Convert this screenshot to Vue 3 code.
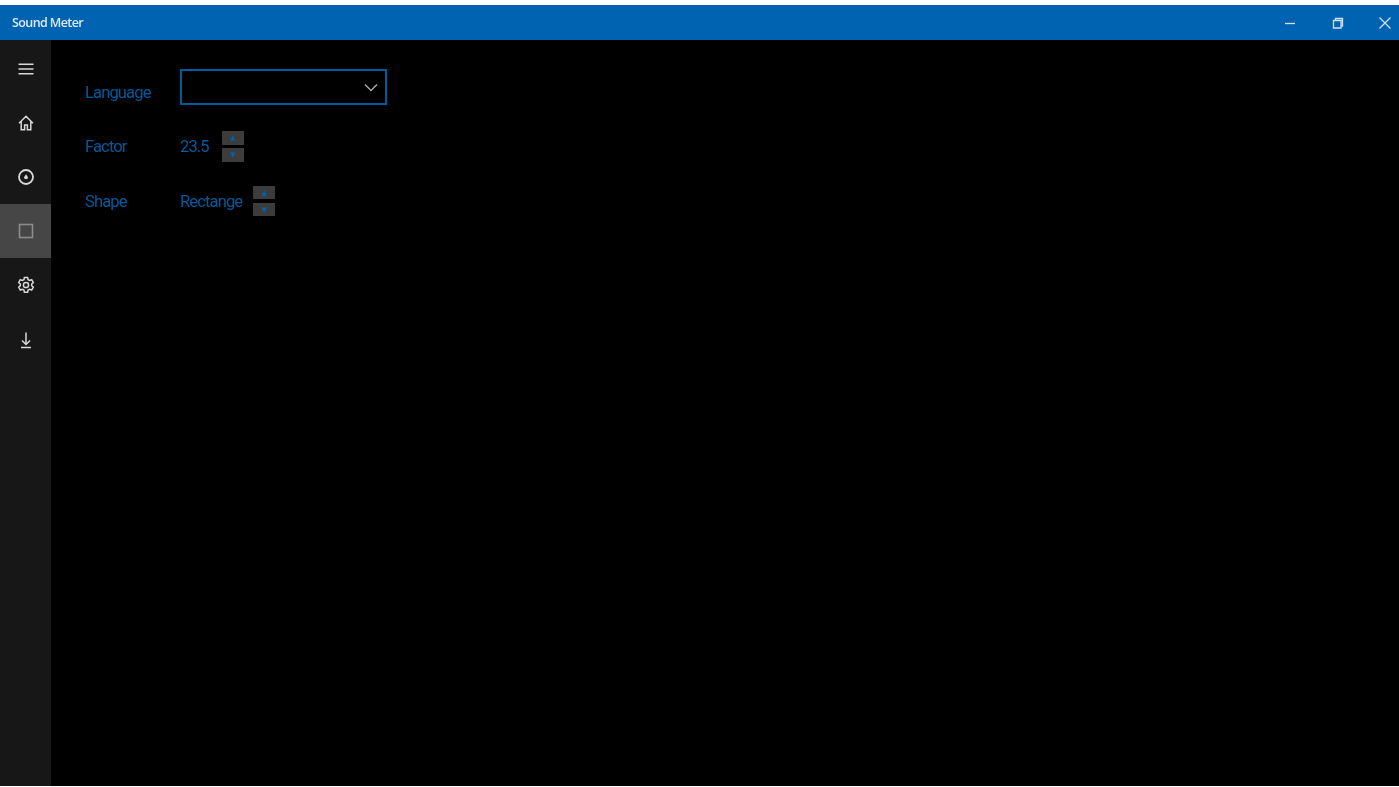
<script setup>
const rows = [
  { label: 'Factor', value: '23.5', kind: 'num' },
  { label: 'Shape', value: 'Rectange', kind: 'txt' }
]
</script>

<template>
  <div class="window">
    <header class="titlebar">
      <span class="title">Sound Meter</span>
      <div class="controls">
        <button class="ctl"><svg width="12" height="12" viewBox="0 0 12 12"><path d="M1 6.500h10" /></svg></button>
        <button class="ctl"><svg width="12" height="12" viewBox="0 0 12 12"><path d="M1.500 3.500h7.500v7.500h-7.500zM3.500 3.500v-2h7v7.500h-1.500" /></svg></button>
        <button class="ctl"><svg width="14" height="14" viewBox="0 0 14 14"><path d="M1.500 1.500l11 11M12.500 1.500l-11 11" /></svg></button>
      </div>
    </header>
    <div class="body">
      <nav class="rail">
        <div class="item">
          <svg width="18" height="18" viewBox="0 0 18 18"><path d="M1.500 4.200h15M1.500 9h15M1.500 13.800h15" /></svg>
        </div>
        <div class="item">
          <svg width="18" height="18" viewBox="0 0 18 18"><path d="M2 9.200L9 2.200l7 7M4.200 7.500v8.300h3.400v-4.800h2.800v4.800h3.400V7.500" /></svg>
        </div>
        <div class="item">
          <svg width="18" height="18" viewBox="0 0 18 18"><circle class="thick" cx="9" cy="9" r="7" /><path class="solid" d="M9 6.200l2 3a2 2 0 1 1-4 0z" /></svg>
        </div>
        <div class="item active">
          <svg width="18" height="18" viewBox="0 0 18 18"><rect x="2.500" y="2.500" width="13" height="13" /></svg>
        </div>
        <div class="item">
          <svg width="18" height="18" viewBox="0 0 18 18"><path d="M7.400 1.500h3.200l.5 2.200 1.500.8 2.100-.8 1.600 2.800-1.600 1.500v1.700l1.600 1.500-1.600 2.800-2.100-.8-1.500.8-.5 2.200H7.400l-.5-2.200-1.500-.8-2.100.8-1.600-2.800 1.600-1.500V8l-1.600-1.500 1.600-2.800 2.100.8 1.500-.8z" /><circle cx="9" cy="9" r="2.600" /></svg>
        </div>
        <div class="item">
          <svg width="18" height="18" viewBox="0 0 18 18"><path d="M9 1.500v12M5 9.500L9 13.500l4-4M4 16.500h10" /></svg>
        </div>
      </nav>
      <main class="content">
        <div class="row first">
          <span class="label lang">Language</span>
          <div class="select">
            <svg width="14" height="9" viewBox="0 0 14 9"><path d="M1 1.500l6 6 6-6" /></svg>
          </div>
        </div>
        <div v-for="r in rows" :key="r.label" class="row">
          <span class="label">{{ r.label }}</span>
          <div class="spin" :class="r.kind">
            <span class="value">{{ r.value }}</span>
            <div class="arrows">
              <span class="arrow">▲</span>
              <span class="arrow">▼</span>
            </div>
          </div>
        </div>
      </main>
    </div>
  </div>
</template>

<style scoped>
.window {
  height: 787px;
  width: 1399px;
  display: flex;
  flex-direction: column;
  padding: 5px 0 1px;
  box-sizing: border-box;
  background: #fff;
  font-family: "Open Sans", "Liberation Sans", sans-serif;
  overflow: hidden;
  filter: blur(0.5px);
}
.titlebar {
  height: 35px;
  flex: none;
  display: flex;
  align-items: center;
  justify-content: space-between;
  background: #0063b1;
  color: #dfe9f3;
  overflow: hidden;
}
.title {
  margin-left: 12px;
  font-size: 12.500px;
  font-weight: 600;
  letter-spacing: -0.6px;
}
.controls {
  display: flex;
  align-items: center;
  margin-right: -10px;
}
.ctl {
  width: 48px;
  height: 35px;
  padding: 0;
  border: 0;
  background: none;
  display: flex;
  align-items: center;
  justify-content: center;
}
.ctl:nth-child(1),
.ctl:nth-child(2) {
  padding-left: 2px;
}
.ctl svg {
  fill: none;
  stroke: #cfe0ef;
  stroke-width: 1.300;
}
.body {
  flex: 1;
  display: flex;
  background: #000;
  min-height: 0;
}
.rail {
  width: 51px;
  flex: none;
  background: #171717;
  padding-top: 1.500px;
}
.item {
  height: 54.200px;
  display: flex;
  align-items: center;
  justify-content: center;
}
.item.active {
  background: #464646;
}
.item svg {
  fill: none;
  stroke: #d8d8d8;
  stroke-width: 1.500;
}
.item.active svg {
  stroke: #8c8c8c;
  stroke-width: 1.600;
}
.item svg .solid {
  fill: #d8d8d8;
  stroke: none;
}
.item svg .thick {
  stroke-width: 1.800;
}
.content {
  padding: 29px 0 0 34px;
  display: flex;
  flex-direction: column;
  color: #005a9e;
  font-family: Roboto, "Open Sans", sans-serif;
}
.row {
  display: grid;
  grid-template-columns: 95px auto;
  align-items: center;
  height: 54.800px;
  font-size: 16.500px;
  letter-spacing: -0.85px;
}
.row.first {
  height: 36px;
  margin-bottom: 14px;
}
.label.lang {
  padding-top: 10px;
}
.select {
  width: 207px;
  height: 36px;
  box-sizing: border-box;
  border: 2px solid #005a9e;
  display: flex;
  align-items: center;
  justify-content: flex-end;
  padding-right: 7px;
}
.select svg {
  fill: none;
  stroke: #a8a8a8;
  stroke-width: 1.500;
}
.spin {
  display: flex;
  align-items: center;
  gap: 11px;
}
.spin.num {
  gap: 13px;
}
.arrows {
  display: flex;
  flex-direction: column;
  gap: 3.500px;
}
.arrow {
  width: 22px;
  height: 13.500px;
  background: #3c3c3c;
  color: #0063b1;
  font-size: 7px;
  letter-spacing: 0;
  display: flex;
  align-items: center;
  justify-content: center;
  font-family: "DejaVu Sans", sans-serif;
}
</style>
